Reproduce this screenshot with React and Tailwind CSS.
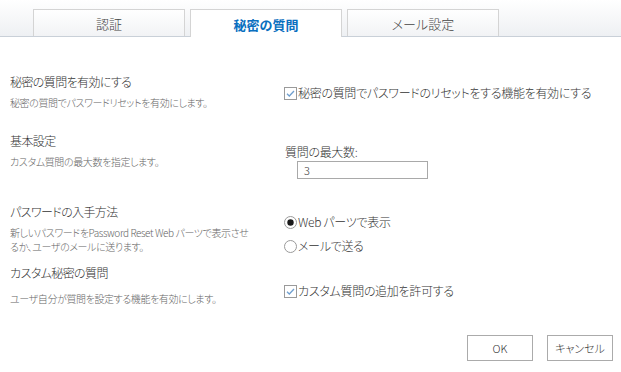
import React from 'react';

const tabs = [
  { label: '認証', active: false },
  { label: '秘密の質問', active: true },
  { label: 'メール設定', active: false },
];

function CheckBox() {
  return (
    <svg width="13" height="13" viewBox="0 0 13 13" className="shrink-0">
      <rect x="0.5" y="0.5" width="12" height="12" fill="#fff" stroke="#9a9a9a" />
      <path d="M3 6.8 L5.3 9 L10 4" fill="none" stroke="#6f9fcf" strokeWidth="1.3" />
    </svg>
  );
}

function Radio({ checked }) {
  return (
    <svg width="13" height="13" viewBox="0 0 13 13" className="shrink-0">
      <circle cx="6.5" cy="6.5" r="6" fill="#fff" stroke="#9a9a9a" />
      {checked && <circle cx="6.5" cy="6.5" r="3.2" fill="#1a1a1a" />}
    </svg>
  );
}

function Section({ title, desc, height, descGap, children, rightPad }) {
  return (
    <div className="flex" style={{ height }}>
      <div className="w-[284px] pl-[10px] pr-[8px]">
        <div className="text-[12px] leading-[16px] tracking-[-0.6px] text-[#333]">{title}</div>
        <div className="text-[10px] leading-[14px] tracking-[-0.4px] text-[#666]" style={{ marginTop: descGap }}>
          {desc}
        </div>
      </div>
      <div className="flex-1" style={{ paddingTop: rightPad }}>
        {children}
      </div>
    </div>
  );
}

export default function App() {
  return (
    <div className="w-[621px] h-[372px] bg-white overflow-hidden font-['Noto_Sans_CJK_JP',sans-serif] font-light [font-feature-settings:'palt']">
      {/* タブ */}
      <div className="h-[37px] bg-gradient-to-b from-white to-[#eef0f3] border-b border-[#c9d0d8] flex items-end pl-[33px] gap-[5px]">
        {tabs.map(t => (
          <div
            key={t.label}
            className={
              t.active
                ? 'w-[152px] h-[28px] -mb-px bg-white border border-b-0 border-[#d4d4d4] flex items-center justify-center pt-[2px] text-[13px] font-bold text-[#0a6fbf]'
                : 'w-[152px] h-[27px] bg-gradient-to-b from-white to-[#f2f3f5] border border-b-0 border-[#d4d4d4] flex items-center justify-center pt-[2px] text-[13px] text-[#444]'
            }
          >
            {t.label}
          </div>
        ))}
      </div>

      <div className="pt-[37px]">
        <Section
          title="秘密の質問を有効にする"
          desc="秘密の質問でパスワードリセットを有効にします。"
          height={59}
          descGap={5.5}
          rightPad={11}
        >
          <label className="flex items-center gap-[1px] text-[12px] leading-[16px] tracking-[-0.3px] text-[#333]">
            <CheckBox />
            <span>秘密の質問でパスワードのリセットをする機能を有効にする</span>
          </label>
        </Section>

        <Section
          title="基本設定"
          desc="カスタム質問の最大数を指定します。"
          height={71}
          descGap={5.5}
          rightPad={11}
        >
          <div className="pl-[1px] text-[12px] leading-[16px] tracking-[-0.3px] text-[#333]">質問の最大数:</div>
          <div className="ml-[13px] mt-[1px] w-[131px] h-[18px] border border-[#a9a9a9] pl-[6px] text-[11px] leading-[16px] text-[#333]">
            3
          </div>
        </Section>

        <Section
          title="パスワードの入手方法"
          desc={<>新しいパスワードをPassword Reset Web パーツで表示させ<br />るか、ユーザのメールに送ります。</>}
          height={61}
          descGap={5.5}
          rightPad={10}
        >
          <div className="flex flex-col gap-[8px] text-[12px] leading-[16px] tracking-[-0.3px] text-[#333]">
            <label className="flex items-center gap-[1px]">
              <Radio checked />
              <span>Web パーツで表示</span>
            </label>
            <label className="flex items-center gap-[1px]">
              <Radio />
              <span>メールで送る</span>
            </label>
          </div>
        </Section>

        <Section
          title="カスタム秘密の質問"
          desc="ユーザ自分が質問を設定する機能を有効にします。"
          height={70}
          descGap={10.5}
          rightPad={18}
        >
          <label className="flex items-center gap-[1px] text-[12px] leading-[16px] tracking-[-0.3px] text-[#333]">
            <CheckBox />
            <span>カスタム質問の追加を許可する</span>
          </label>
        </Section>

        <div className="flex justify-end gap-[14px] pr-[8px]">
          <button className="w-[66px] h-[26px] bg-white border border-[#ababab] text-[11px] text-[#333]">OK</button>
          <button className="w-[66px] h-[26px] bg-white border border-[#ababab] text-[11px] text-[#333]">キャンセル</button>
        </div>
      </div>
    </div>
  );
}
